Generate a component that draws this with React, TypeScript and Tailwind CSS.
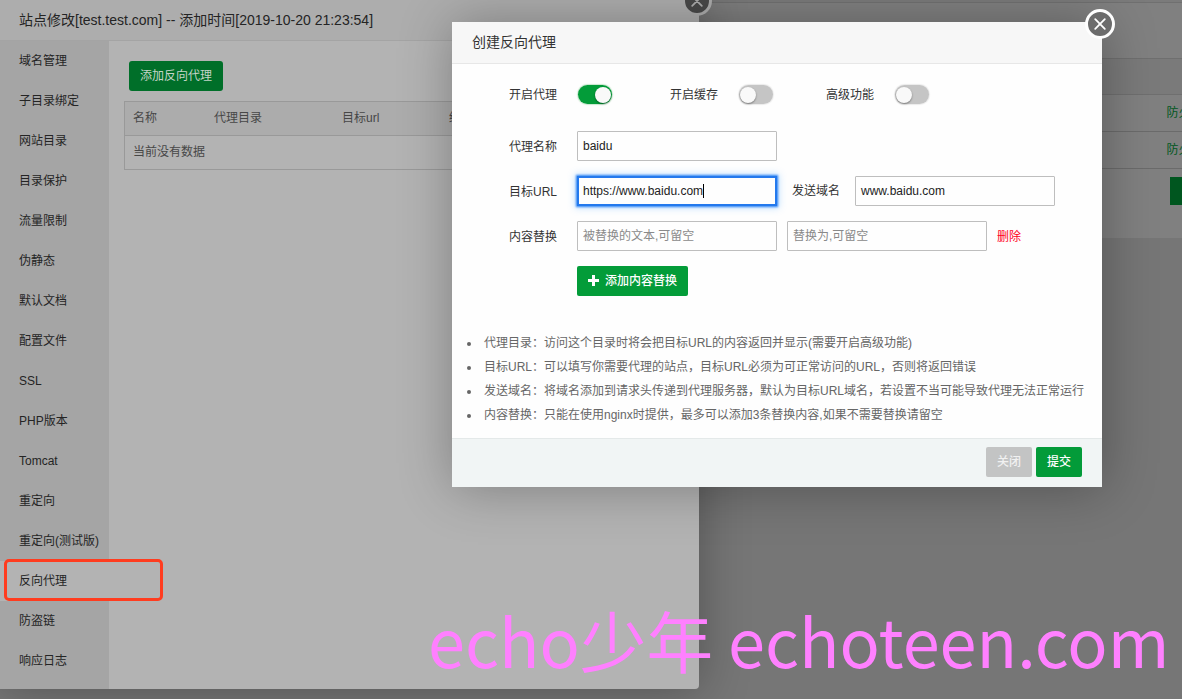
import React from "react";

const menu = [
  "域名管理", "子目录绑定", "网站目录", "目录保护", "流量限制", "伪静态", "默认文档", "配置文件",
  "SSL", "PHP版本", "Tomcat", "重定向", "重定向(测试版)", "反向代理", "防盗链", "响应日志",
];

const tips = [
  "代理目录：访问这个目录时将会把目标URL的内容返回并显示(需要开启高级功能)",
  "目标URL：可以填写你需要代理的站点，目标URL必须为可正常访问的URL，否则将返回错误",
  "发送域名：将域名添加到请求头传递到代理服务器，默认为目标URL域名，若设置不当可能导致代理无法正常运行",
  "内容替换：只能在使用nginx时提供，最多可以添加3条替换内容,如果不需要替换请留空",
];

function Toggle({ on = false }: { on?: boolean }) {
  return (
    <span className={`flex h-[19px] w-[34px] items-center rounded-full px-[1px] ${on ? "justify-end bg-[#039c39] shadow-[0_0_1px_1px_rgba(32,165,58,0.25)]" : "justify-start bg-[#c6c6c6] shadow-[0_0_1px_1px_rgba(0,0,0,0.08)]"}`}>
      <span className="size-4 rounded-full bg-[#fafafa] shadow-[0_1px_2px_rgba(0,0,0,0.4)]" />
    </span>
  );
}

function Close({ className }: { className: string }) {
  return (
    <span className={`absolute flex size-[30px] items-center justify-center rounded-full border-[3px] ${className}`}>
      <svg viewBox="0 0 24 24" className="size-6" fill="none" stroke="currentColor" strokeWidth="1.8" strokeLinecap="round">
        <path d="M7.2 7.2 16.8 16.8M16.8 7.2 7.2 16.8" />
      </svg>
    </span>
  );
}

function Label({ children, className = "" }: { children: React.ReactNode; className?: string }) {
  return <label className={`shrink-0 whitespace-nowrap text-[#333] ${className}`}>{children}</label>;
}

const field =
  "flex h-[30px] w-[200px] shrink-0 items-center rounded-[1px] border border-[#bfbfbf] bg-white px-[5px] text-[#222]";

export default function App() {
  return (
    <div className="relative h-[699px] w-[1182px] overflow-hidden bg-[#767676] font-['Liberation_Sans','Noto_Sans_CJK_SC',sans-serif] text-xs">
      <div className="flex h-[238px] flex-col bg-[#808080] text-[#005721]">
        <div className="h-[3px] border-b border-[#707070] bg-[#7b7b7b]" />
        <div className="h-[56px] border-b border-[#6f6f6f]" />
        <div className="h-9 border-b border-[#6f6f6f] bg-[#7a7a7a]" />
        <div className="flex h-[37px] items-center border-b border-[#6b6b6b] pl-[1166.5px] whitespace-nowrap">防火墙</div>
        <div className="flex h-[37px] items-center border-b border-[#6b6b6b] pl-[1166.5px] whitespace-nowrap">防火墙</div>
        <div className="flex justify-end pt-2">
          <div className="h-7 w-3 bg-[#00561f]" />
        </div>
      </div>

      <section className="absolute top-0 left-0 flex h-[689px] w-[699px] flex-col rounded-br-sm bg-[#b3b3b3] text-[#242424] shadow-[1px_1px_50px_rgba(0,0,0,0.3)]">
        <header className="flex h-[41px] shrink-0 items-center border-b border-[#a4a4a4] bg-[#adadad] pl-[19px] text-sm">
          站点修改[test.test.com] -- 添加时间[2019-10-20 21:23:54]
        </header>
        <div className="flex grow">
          <nav className="w-[109px] shrink-0 bg-[#a5a5a5]">
            {menu.map((item) => (
              <div key={item} className={`flex h-10 items-center pl-[19px] whitespace-nowrap ${item === "反向代理" ? "bg-[#b3b3b3]" : ""}`}>
                {item}
              </div>
            ))}
          </nav>
          <main className="grow px-[15px] pt-5 text-[#474747]">
            <button className="ml-[5px] flex h-[30px] w-[94px] items-center justify-center rounded-[3px] bg-[#006f29] text-[#c4d4c8]">添加反向代理</button>
            <div className="mt-[10px] border border-[#999]">
              <div className="flex h-[34px] items-center border-b border-[#999] bg-[#acacac] pb-px pl-2">
                <span className="w-[81px]">名称</span>
                <span className="w-[128px]">代理目录</span>
                <span className="w-[107px]">目标url</span>
                <span>缓存</span>
              </div>
              <div className="flex h-[33px] items-center pb-px pl-2">当前没有数据</div>
            </div>
          </main>
        </div>
        <Close className="-top-[14px] left-[682px] border-[#adadad] bg-[#494949] text-[#adadad]" />
      </section>

      <div className="absolute top-[559px] left-[4px] h-[42px] w-[159px] rounded-[5px] border-[3px] border-[#ff3c1f]" />

      <section className="absolute top-[22px] left-[452px] flex h-[465px] w-[650px] flex-col bg-white opacity-[0.995] shadow-[1px_1px_50px_rgba(0,0,0,0.3)]">
        <header className="flex h-[42px] shrink-0 items-center border-b border-[#e8e8e8] bg-[#f8f8f8] pb-px pl-5 text-sm text-[#333]">创建反向代理</header>
        <div className="flex grow flex-col">
          <div className="mt-[21px] flex h-[19px] items-center">
            <Label className="w-[105px] pt-px text-right">开启代理</Label>
            <span className="ml-[21px]"><Toggle on /></span>
            <Label className="ml-[58px] w-12 pt-px">开启缓存</Label>
            <span className="ml-[21px]"><Toggle /></span>
            <Label className="ml-[53px] w-12 pt-px">高级功能</Label>
            <span className="ml-[21px]"><Toggle /></span>
          </div>
          <div className="mt-[27px] flex h-[30px] items-center">
            <Label className="mr-5 w-[105px] pt-0.5 text-right">代理名称</Label>
            <div className={field}>baidu</div>
          </div>
          <div className="mt-[15px] flex h-[30px] items-center">
            <Label className="mr-5 w-[105px] pt-0.5 text-right">目标URL</Label>
            <div className="flex h-[30px] w-[200px] shrink-0 items-center border-2 border-[#2479ee] bg-white px-1 text-[#222] shadow-[0_0_2px_1px_#2f86f5,0_0_7px_2px_rgba(80,170,255,0.35)]">
              https://www.baidu.com<span className="h-[14px] w-px bg-black" />
            </div>
            <Label className="mr-[15px] ml-[15px] w-12">发送域名</Label>
            <div className={field}>www.baidu.com</div>
          </div>
          <div className="mt-[15px] flex h-[30px] items-center">
            <Label className="mr-5 w-[105px] pt-0.5 text-right">内容替换</Label>
            <div className={field}><span className="text-[#8a8a8a]">被替换的文本,可留空</span></div>
            <div className={`${field} ml-[10px]`}><span className="text-[#8a8a8a]">替换为,可留空</span></div>
            <a className="ml-[10px] pt-px text-[#ff0022]">删除</a>
          </div>
          <button className="mt-[15px] ml-[125px] flex h-[30px] w-[111px] items-center rounded-[2px] bg-[#039c39] pl-[11px] font-medium text-white">
            <svg viewBox="0 0 11 11" className="mr-[6px] mb-px size-[11px]" fill="currentColor">
              <path d="M4 0h3v4h4v3H7v4H4V7H0V4h4z" />
            </svg>
            添加内容替换
          </button>
          <ul className="mt-[35px] leading-6 text-[#666]">
            {tips.map((tip) => (
              <li key={tip} className="flex items-center pl-[15px] whitespace-nowrap">
                <span className="mt-[2px] mr-[13px] size-1 shrink-0 rounded-full bg-[#666]" />
                {tip}
              </li>
            ))}
          </ul>
        </div>
        <footer className="flex h-[49px] shrink-0 items-start justify-end gap-1 border-t border-[#e5eaea] bg-[#f2f6f6] pt-2 pr-5 font-medium text-white">
          <button className="h-[30px] w-[46px] rounded-[2px] bg-[#c4c5c5] text-[#f2f2f2]">关闭</button>
          <button className="h-[30px] w-[46px] rounded-[2px] bg-[#039c39]">提交</button>
        </footer>
        <Close className="-top-[13px] left-[633px] border-white bg-[#6c6c6c] text-white" />
      </section>

      <div className="absolute top-[589px] left-[428px] font-['Noto_Sans_CJK_SC',sans-serif] text-[66.67px] leading-[100px] whitespace-nowrap text-[#ff80ff]">
        echo少年 echoteen.com
      </div>
    </div>
  );
}
